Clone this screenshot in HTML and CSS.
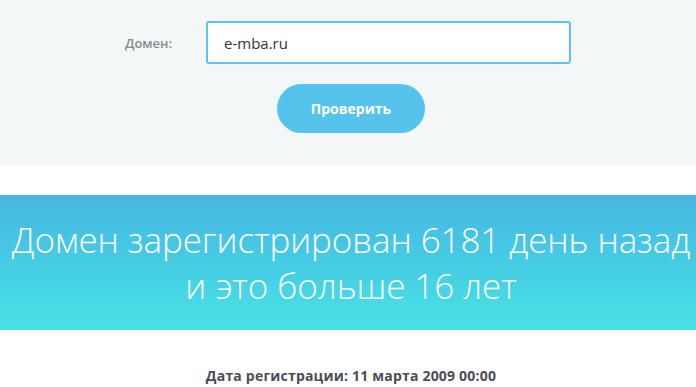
FILE: index.html
```
<!DOCTYPE html>
<html lang="ru">
<head>
  <meta charset="UTF-8">
  <meta name="viewport" content="width=device-width, initial-scale=1.0">
  <title>Возраст домена</title>
  <link rel="stylesheet" href="styles.css">
</head>
<body>
  <!-- Форма проверки -->
  <div class="check">
    <div class="check-row">
      <label class="check-label" for="domainInput">Домен:</label>
      <input id="domainInput" class="check-input" type="text" value="e-mba.ru">
    </div>
    <div class="check-actions">
      <button class="btn-check">Проверить</button>
    </div>
  </div>

  <!-- Результат -->
  <div class="result">
    <h1 class="result-title">Домен зарегистрирован 6181 день назад<br>и это больше 16 лет</h1>
  </div>

  <p class="reg-date">Дата регистрации: 11 марта 2009 00:00</p>
</body>
</html>
```

FILE: styles.css
```
* {
  margin: 0;
  padding: 0;
  box-sizing: border-box;
  font-family: "Open Sans", sans-serif;
}

body {
  background-color: #fff;
  color: #333;
}

.check {
  background-color: #f4f7f8;
  height: 165px;
  padding-top: 21px;
}

.check-row {
  display: flex;
  justify-content: center;
  align-items: center;
  gap: 31px;
}

.check-label {
  width: 50px;
  font-size: 13px;
  font-weight: 600;
  color: #8a8a8a;
}

.check-input {
  width: 365px;
  height: 43px;
  padding: 0 16px;
  font-size: 15px;
  color: #333;
  border: 2px solid #5bc3ec;
  border-radius: 3px;
  background-color: #fff;
  outline: none;
}

.check-actions {
  display: flex;
  justify-content: center;
  margin-top: 20px;
  padding-left: 6px;
}

.btn-check {
  width: 148px;
  height: 49px;
  background-color: #56c3ec;
  color: #fff;
  border: none;
  border-radius: 25px;
  font-size: 14px;
  font-weight: 700;
  cursor: pointer;
}

.result {
  margin-top: 30px;
  height: 135px;
  display: flex;
  align-items: center;
  justify-content: center;
  padding-left: 6px;
  background: linear-gradient(to bottom, #46b6e3, #47e2e5);
}

.result-title {
  text-align: center;
  color: #fff;
  font-size: 35px;
  font-weight: 300;
  line-height: 46px;
  letter-spacing: -0.1px;
  white-space: nowrap;
}

.reg-date {
  margin-top: 36px;
  padding-left: 6px;
  text-align: center;
  font-size: 14px;
  font-weight: 700;
  letter-spacing: 0.2px;
  color: #4b4d57;
}
```
